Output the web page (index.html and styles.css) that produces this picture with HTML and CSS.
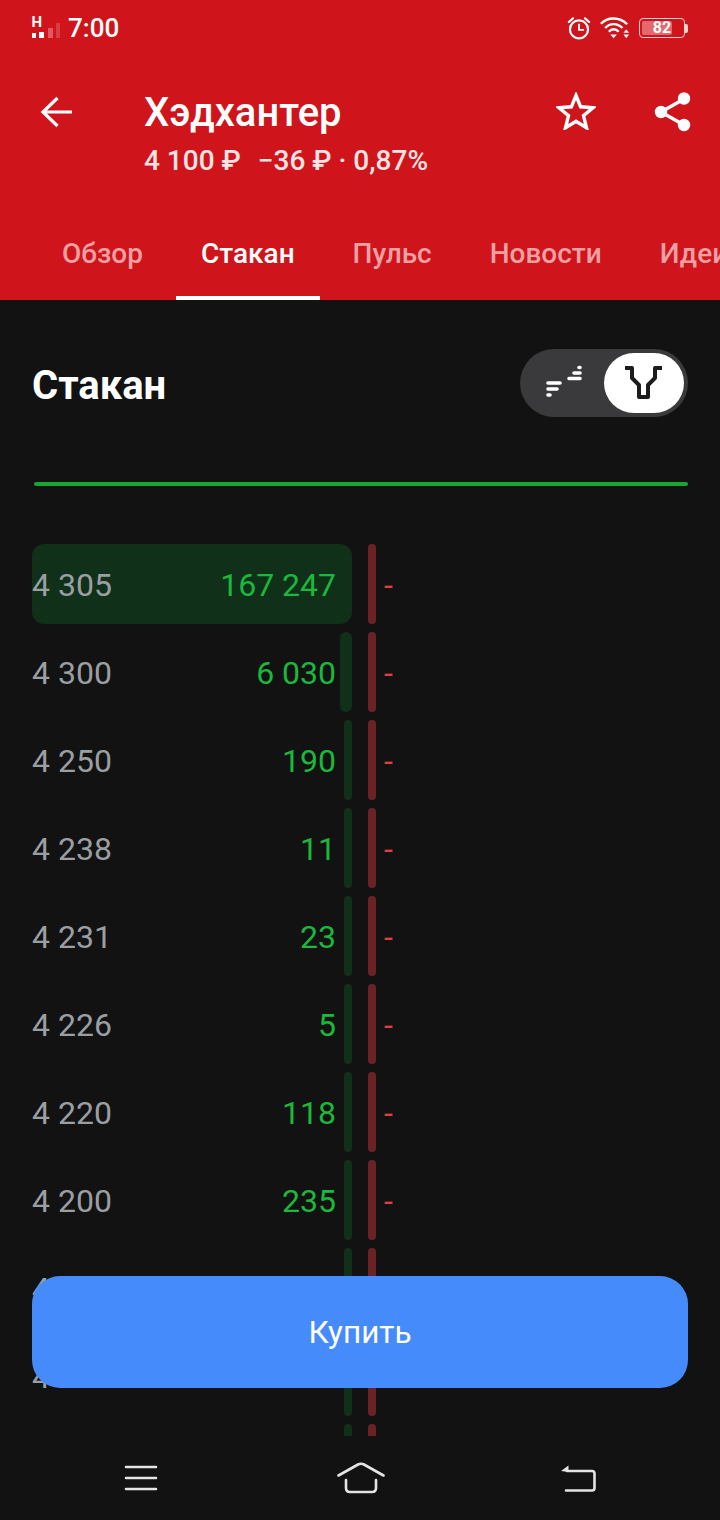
FILE: index.html
```html
<!DOCTYPE html>
<html lang="ru">
<head>
  <meta charset="UTF-8" />
  <title>Стакан</title>
  <meta name="viewport" content="width=device-width, initial-scale=1.0" />
  <link rel="stylesheet" href="styles.css">
</head>

<body>

  <!-- Red header -->
  <header class="top">
    <div class="status">
      <div class="status-left">
        <svg class="signal" width="30" height="24" viewBox="0 0 30 24">
          <text class="signal-h" x="-0.500" y="11">H</text>
          <rect x="0" y="17" width="4" height="5" fill="#fff"/>
          <rect x="7" y="16" width="5" height="6" fill="#fff"/>
          <rect x="16" y="12" width="5" height="10" fill="#fff" opacity="0.3"/>
          <rect x="24" y="7" width="4" height="15" fill="#fff" opacity="0.18"/>
        </svg>
        <span class="clock">7:00</span>
      </div>
      <div class="status-right">
        <svg width="24" height="24" viewBox="0 0 26 26" fill="none" stroke="#fff" stroke-width="2.400">
          <circle cx="13" cy="14.500" r="9.800"/>
          <path d="M13 8.500v6.500h5.500" stroke-width="2"/>
          <path d="M2 6.500 6.500 2.500M24 6.500 19.500 2.500" stroke-linecap="round"/>
        </svg>
        <svg width="30" height="26" viewBox="0 0 32 26" fill="none" stroke="#fff" stroke-width="2.600">
          <path d="M1 8.500C8 1 21 1 29 9"/>
          <path d="M5.500 13C10.500 7.500 18.500 7.500 24 13"/>
          <path d="M9.500 17C12.500 13.500 16.500 13.500 20 17"/>
          <path d="M11 20h7l-3.500 4z" fill="#fff" stroke="none"/>
          <path d="M25 18l3-3.500 3 3.500zM25 20h6l-3 4z" fill="#fff" stroke="none"/>
        </svg>
        <div class="battery">
          <div class="battery-body">
            <div class="battery-level"></div>
            <span class="battery-num">82</span>
          </div>
          <div class="battery-tip"></div>
        </div>
      </div>
    </div>

    <div class="title-row">
      <svg class="back" width="36" height="36" viewBox="0 0 36 36" fill="none" stroke="#fff" stroke-width="3.200">
        <path d="M33 17H4M18.500 3 4 17 18.500 31"/>
      </svg>
      <div class="title-text">
        <h1>Хэдхантер</h1>
        <p>4 100 ₽ <span class="change">−36 ₽ · 0,87%</span></p>
      </div>
      <svg class="star" width="40" height="38" viewBox="0 0 40 38" fill="none" stroke="#fff" stroke-width="3.400">
        <path d="M20 3.500 24.600 14.800 37 15.700 27.500 23.700 30.500 35.800 20 29.200 9.500 35.800 12.500 23.700 3 15.700 15.400 14.800z"/>
      </svg>
      <svg class="share" width="38" height="42" viewBox="0 0 38 42" fill="#fff" stroke="#fff" stroke-width="3.400">
        <path d="M30 8 7 21 30 34" fill="none"/>
        <circle cx="30" cy="7.500" r="4.500"/>
        <circle cx="7" cy="21" r="4.500"/>
        <circle cx="30" cy="34" r="4.500"/>
      </svg>
    </div>

    <nav class="tabs">
      <a href="#">Обзор</a>
      <a href="#" class="active">Стакан</a>
      <a href="#">Пульс</a>
      <a href="#">Новости</a>
      <a href="#">Идеи</a>
    </nav>
  </header>

  <!-- Order book -->
  <main>
    <div class="head-row">
      <h2>Стакан</h2>
      <div class="toggle">
        <span class="toggle-item">
          <svg width="40" height="36" viewBox="0 0 40 36" fill="none" stroke="#fff" stroke-width="3.600" stroke-linecap="round">
            <path d="M4 18h12M4 24h9M4 30h2"/>
            <path d="M35 2.500h1M30 8h6M25 13.500h11"/>
          </svg>
        </span>
        <span class="toggle-item on">
          <svg width="40" height="34" viewBox="0 0 40 34" fill="none" stroke="#1c1c1e" stroke-width="4" stroke-linejoin="round">
            <path d="M1 2h7v10l7 7v12h9V19l7-7V2h7"/>
          </svg>
        </span>
      </div>
    </div>
    <div class="green-line"></div>

    <div class="book">
      <div class="row">
        <div class="bid"><div class="bid-bar" style="width:320px"></div><span class="price">4 305</span><span class="qty">167 247</span></div>
        <div class="ask-bar"></div><span class="dash">-</span>
      </div>
      <div class="row">
        <div class="bid"><div class="bid-bar" style="width:12px"></div><span class="price">4 300</span><span class="qty">6 030</span></div>
        <div class="ask-bar"></div><span class="dash">-</span>
      </div>
      <div class="row">
        <div class="bid"><div class="bid-bar" style="width:8px"></div><span class="price">4 250</span><span class="qty">190</span></div>
        <div class="ask-bar"></div><span class="dash">-</span>
      </div>
      <div class="row">
        <div class="bid"><div class="bid-bar" style="width:8px"></div><span class="price">4 238</span><span class="qty">11</span></div>
        <div class="ask-bar"></div><span class="dash">-</span>
      </div>
      <div class="row">
        <div class="bid"><div class="bid-bar" style="width:8px"></div><span class="price">4 231</span><span class="qty">23</span></div>
        <div class="ask-bar"></div><span class="dash">-</span>
      </div>
      <div class="row">
        <div class="bid"><div class="bid-bar" style="width:8px"></div><span class="price">4 226</span><span class="qty">5</span></div>
        <div class="ask-bar"></div><span class="dash">-</span>
      </div>
      <div class="row">
        <div class="bid"><div class="bid-bar" style="width:8px"></div><span class="price">4 220</span><span class="qty">118</span></div>
        <div class="ask-bar"></div><span class="dash">-</span>
      </div>
      <div class="row">
        <div class="bid"><div class="bid-bar" style="width:8px"></div><span class="price">4 200</span><span class="qty">235</span></div>
        <div class="ask-bar"></div><span class="dash">-</span>
      </div>
      <div class="row">
        <div class="bid"><div class="bid-bar" style="width:8px"></div><span class="price">4 190</span></div>
        <div class="ask-bar"></div>
      </div>
      <div class="row">
        <div class="bid"><div class="bid-bar" style="width:8px"></div><span class="price">4 180</span></div>
        <div class="ask-bar"></div>
      </div>
      <div class="row">
        <div class="bid"><div class="bid-bar" style="width:8px"></div></div>
        <div class="ask-bar"></div>
      </div>
    </div>

    <button class="buy">Купить</button>
  </main>

  <!-- System navigation -->
  <footer class="sysnav">
    <svg class="sys-menu" width="34" height="26" viewBox="0 0 34 26" stroke="#e4e4e4" stroke-width="2.600" stroke-linecap="round">
      <path d="M2 2h30M2 13h30M2 24h30"/>
    </svg>
    <svg width="48" height="32" viewBox="0 0 48 32" fill="none" stroke="#e4e4e4" stroke-width="2.600" stroke-linecap="round">
      <path d="M1.500 13.500 21 2.500q3-1.500 6 0L46.500 13.500"/>
      <path d="M9 18v8q0 4 4 4h22q4 0 4-4v-8"/>
    </svg>
    <svg width="36" height="28" viewBox="0 0 36 28" fill="none" stroke="#e4e4e4" stroke-width="2.600" stroke-linecap="round">
      <path d="M7 7h25q2.500 0 2.500 2.500V24q0 2.500-2.500 2.500H6"/>
      <path d="M1 7 8.500 1.500V8z" fill="#e4e4e4" stroke="none"/>
    </svg>
  </footer>

</body>
</html>
```

FILE: styles.css
```css
* {
  box-sizing: border-box;
}

body {
  margin: 0;
  width: 720px;
  height: 1520px;
  display: flex;
  flex-direction: column;
  overflow: hidden;
  font-family: Roboto, "Noto Sans", sans-serif;
  background-color: #121212;
  color: #fff;
}

/* Header */
.top {
  height: 300px;
  flex: none;
  background-color: #d0141b;
  display: flex;
  flex-direction: column;
}

.status {
  height: 56px;
  padding: 0 32px;
  display: flex;
  justify-content: space-between;
  align-items: center;
}

.status-left {
  display: flex;
  align-items: center;
  gap: 6px;
}

.signal {
  overflow: visible;
}

.signal-h {
  font-size: 15px;
  font-weight: 700;
  fill: #fff;
}

.clock {
  font-size: 26px;
  font-weight: 500;
}

.status-right {
  display: flex;
  align-items: center;
  gap: 9px;
}

.battery {
  display: flex;
  align-items: center;
}

.battery-body {
  position: relative;
  width: 46px;
  height: 20px;
  border: 1.500px solid #f6d0d0;
  border-radius: 4px;
  padding: 2px;
}

.battery-level {
  width: 76%;
  height: 100%;
  background-color: #e4686d;
  border-radius: 2px;
}

.battery-num {
  position: absolute;
  left: 0;
  right: 0;
  top: -1px;
  text-align: center;
  font-size: 16px;
  line-height: 19px;
  font-weight: 700;
}

.battery-tip {
  width: 3px;
  height: 9px;
  background-color: #f6d0d0;
  border-radius: 0 2px 2px 0;
}

.title-row {
  height: 152px;
  padding: 0 28px 0 39px;
  display: flex;
  align-items: flex-start;
}

.back {
  margin-top: 39px;
}

.title-text {
  margin-left: 69px;
  flex: 1;
  padding-top: 35px;
}

h1 {
  margin: 0;
  font-size: 40px;
  line-height: 44px;
  font-weight: 500;
}

.title-text p {
  margin: 11px 0 0;
  font-size: 28px;
  line-height: 30px;
  font-weight: 500;
  color: #fbe4e4;
}

.change {
  margin-left: 10px;
}

.star {
  margin-top: 36px;
}

.share {
  margin-top: 35px;
  margin-left: 58px;
}

/* Tabs */
.tabs {
  height: 92px;
  padding-left: 37px;
  display: flex;
  gap: 8px;
  overflow: hidden;
}

.tabs a {
  flex: none;
  padding: 2px 25px 0;
  height: 100%;
  display: flex;
  align-items: center;
  color: #eea0a3;
  font-size: 28px;
  font-weight: 500;
  text-decoration: none;
  border-bottom: 4px solid transparent;
}

.tabs a.active {
  color: #fff;
  border-bottom-color: #fff;
}

/* Order book */
main {
  position: relative;
  flex: 1;
  overflow: hidden;
  padding: 0 32px;
}

.head-row {
  height: 182px;
  padding-top: 49px;
  display: flex;
  justify-content: space-between;
  align-items: flex-start;
}

h2 {
  margin: 15px 0 0;
  font-size: 40px;
  line-height: 44px;
  font-weight: 700;
}

.toggle {
  width: 168px;
  height: 68px;
  padding: 4px;
  border-radius: 34px;
  background-color: #3a3a3c;
  display: flex;
  justify-content: space-between;
}

.toggle-item {
  width: 80px;
  height: 60px;
  border-radius: 30px;
  display: flex;
  align-items: center;
  justify-content: center;
}

.toggle-item.on {
  background-color: #fff;
}

.green-line {
  height: 4px;
  margin-left: 2px;
  background-color: #1aa52e;
  border-radius: 2px;
}

.book {
  margin-top: 58px;
}

.row {
  height: 80px;
  margin-bottom: 8px;
  display: flex;
  font-size: 32px;
}

.bid {
  position: relative;
  width: 320px;
  padding: 2px 16px 0 0;
  display: flex;
  justify-content: space-between;
  align-items: center;
}

.bid-bar {
  position: absolute;
  right: 0;
  top: 0;
  bottom: 0;
  background-color: #11301a;
  border-radius: 12px;
}

.price {
  position: relative;
  color: #9a9fa3;
}

.qty {
  position: relative;
  color: #1ab83c;
}

.ask-bar {
  width: 8px;
  margin-left: 16px;
  background-color: #6a2226;
  border-radius: 4px;
}

.dash {
  margin-left: 8px;
  padding-top: 2px;
  align-self: center;
  color: #e8393f;
}

.buy {
  position: absolute;
  left: 32px;
  top: 976px;
  width: 656px;
  height: 112px;
  border: none;
  border-radius: 28px;
  background-color: #468bfb;
  color: #fff;
  font-family: inherit;
  font-size: 31.500px;
}

/* System navigation */
.sysnav {
  height: 84px;
  flex: none;
  padding: 0 124px;
  display: flex;
  justify-content: space-between;
  align-items: center;
  background-color: #121212;
}

.sys-menu {
  margin-right: 3px;
}
```
